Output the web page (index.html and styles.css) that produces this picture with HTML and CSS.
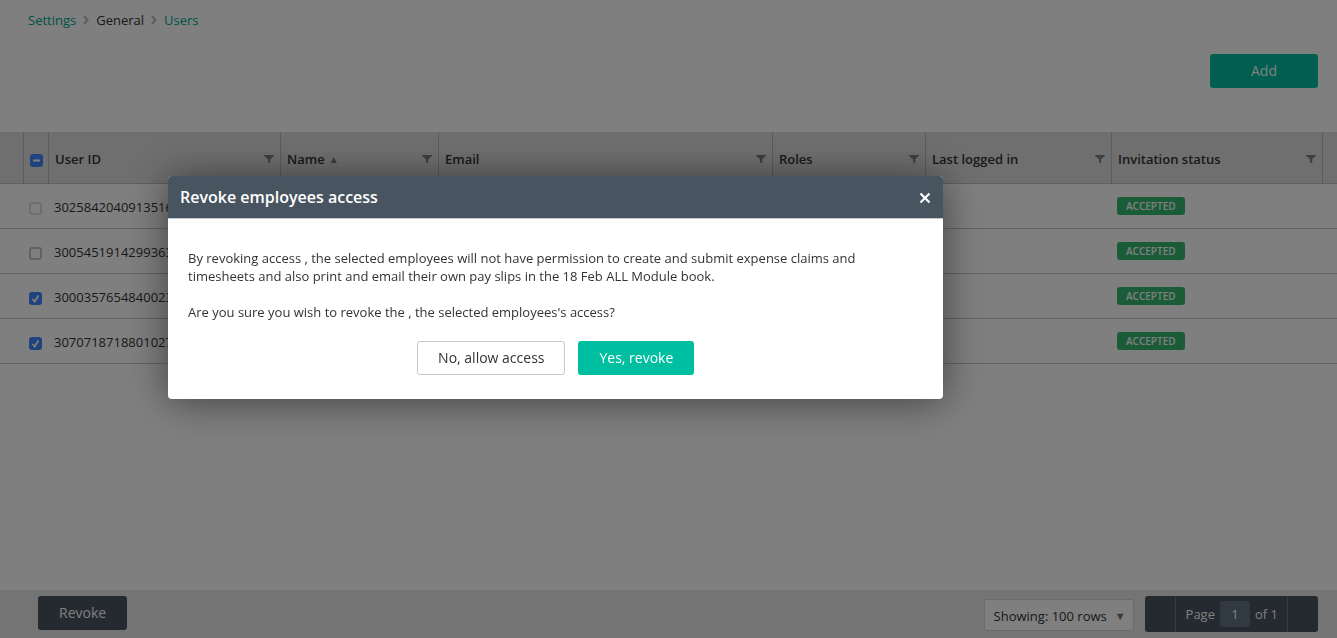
FILE: index.html
```html
<!DOCTYPE html>
<html lang="en">
<head>
<meta charset="UTF-8">
<meta name="viewport" content="width=device-width, initial-scale=1.0">
<title>Users</title>
<link rel="stylesheet" href="styles.css">
</head>
<body>
<svg class="sprite" aria-hidden="true">
  <symbol id="funnel" viewBox="0 0 10 9"><path d="M0 0h10v.8L6.200 4.300V8.600L4 7.200V4.300L0 .8z"/></symbol>
  <symbol id="chevron" viewBox="0 0 6 10"><path d="M1 1l3.500 4L1 9" fill="none" stroke="currentColor" stroke-width="2"/></symbol>
</svg>
<div class="page">
  <nav class="breadcrumb">
    <a href="#">Settings</a>
    <svg class="chevron"><use href="#chevron"/></svg>
    <span>General</span>
    <svg class="chevron"><use href="#chevron"/></svg>
    <a href="#">Users</a>
  </nav>
  <div class="actions">
    <button type="button" class="btn btn-primary btn-add">Add</button>
  </div>
  <table class="grid">
    <colgroup>
      <col class="col-gutter">
      <col class="col-check">
      <col class="col-id">
      <col class="col-name">
      <col class="col-email">
      <col class="col-roles">
      <col class="col-login">
      <col class="col-status">
      <col class="col-end">
    </colgroup>
    <thead>
      <tr>
        <th></th>
        <th class="check"><input type="checkbox" id="selectAll" class="box" aria-label="Select all"></th>
        <th><div class="head">User ID <svg class="funnel"><use href="#funnel"/></svg></div></th>
        <th><div class="head">Name <span class="sort">▲</span><svg class="funnel"><use href="#funnel"/></svg></div></th>
        <th><div class="head">Email <svg class="funnel"><use href="#funnel"/></svg></div></th>
        <th><div class="head">Roles <svg class="funnel"><use href="#funnel"/></svg></div></th>
        <th><div class="head">Last logged in <svg class="funnel"><use href="#funnel"/></svg></div></th>
        <th><div class="head">Invitation status <svg class="funnel"><use href="#funnel"/></svg></div></th>
        <th></th>
      </tr>
    </thead>
    <tbody>
      <tr>
        <td></td>
        <td class="check"><input type="checkbox" class="box" aria-label="Select user" disabled></td>
        <td>3025842040913516</td>
        <td></td><td></td><td></td><td></td>
        <td><span class="badge">ACCEPTED</span></td>
        <td></td>
      </tr>
      <tr>
        <td></td>
        <td class="check"><input type="checkbox" class="box" aria-label="Select user"></td>
        <td>3005451914299363</td>
        <td></td><td></td><td></td><td></td>
        <td><span class="badge">ACCEPTED</span></td>
        <td></td>
      </tr>
      <tr>
        <td></td>
        <td class="check"><input type="checkbox" class="box" aria-label="Select user" checked></td>
        <td>3000357654840023</td>
        <td></td><td></td><td></td><td></td>
        <td><span class="badge">ACCEPTED</span></td>
        <td></td>
      </tr>
      <tr>
        <td></td>
        <td class="check"><input type="checkbox" class="box" aria-label="Select user" checked></td>
        <td>3070718718801027</td>
        <td></td><td></td><td></td><td></td>
        <td><span class="badge">ACCEPTED</span></td>
        <td></td>
      </tr>
    </tbody>
  </table>
  <footer class="footer">
    <button type="button" class="btn btn-dark">Revoke</button>
    <div class="rows">
      <select class="rows-select" aria-label="Rows per page">
        <option>Showing: 100 rows</option>
      </select>
      <span class="arrow">▼</span>
    </div>
    <div class="pager">
      <button type="button" class="pager-btn" aria-label="Previous page"></button>
      <div class="pager-text">
        <label for="pageNo">Page</label>
        <input type="text" id="pageNo" class="pager-input" value="1">
        <span>of 1</span>
      </div>
      <button type="button" class="pager-btn" aria-label="Next page"></button>
    </div>
  </footer>
</div>

<div class="overlay">
  <div class="modal" role="dialog" aria-labelledby="modalTitle">
    <div class="modal-header">
      <h2 id="modalTitle" class="modal-title">Revoke employees access</h2>
      <button type="button" class="close" aria-label="Close">
        <svg width="12" height="12" viewBox="0 0 12 12"><path d="M1.500 1.500l9 9M10.500 1.500l-9 9" stroke="#fff" stroke-width="2.200"/></svg>
      </button>
    </div>
    <div class="modal-body">
      <p>By revoking access , the selected employees will not have permission to create and submit expense claims and timesheets and also print and email their own pay slips in the 18 Feb ALL Module book.</p>
      <p>Are you sure you wish to revoke the , the selected employees's access?</p>
      <div class="modal-buttons">
        <button type="button" class="btn btn-plain">No, allow access</button>
        <button type="button" class="btn btn-primary">Yes, revoke</button>
      </div>
    </div>
  </div>
</div>
<script>
document.getElementById("selectAll").indeterminate = true;
</script>
</body>
</html>
```
FILE: styles.css
```css
* {
  box-sizing: border-box;
}
body {
  margin: 0;
  font-family: "Open Sans", "Noto Sans", sans-serif;
  font-size: 13px;
  line-height: 18px;
  color: #333;
  background-color: #fff;
}
.sprite {
  position: absolute;
  width: 0;
  height: 0;
}
.page {
  display: flex;
  flex-direction: column;
  min-height: 100vh;
}
.breadcrumb {
  display: flex;
  align-items: center;
  gap: 7px;
  padding: 11px 28px 0;
}
.breadcrumb a {
  color: #00a88d;
  font-weight: 500;
  text-decoration: none;
}
.chevron {
  width: 6px;
  height: 10px;
  color: #bbb;
}
.actions {
  display: flex;
  justify-content: flex-end;
  padding: 25px 19px 44px;
}
.btn {
  height: 34px;
  padding: 0 20px 2px;
  border: 1px solid transparent;
  border-radius: 3px;
  font-family: inherit;
  font-size: 14px;
  cursor: pointer;
}
.btn-primary {
  background-color: #00bfa0;
  color: #fff;
  font-weight: 500;
}
.btn-add {
  width: 108px;
}
.btn-dark {
  background-color: #48545f;
  color: #fff;
}
.btn-plain {
  background-color: #fff;
  border-color: #c8c8c8;
  color: #333;
}
.grid {
  width: 100%;
  table-layout: fixed;
  border-collapse: separate;
  border-spacing: 0;
}
.col-gutter { width: 24px; }
.col-check { width: 25px; }
.col-id { width: 232px; }
.col-name { width: 158px; }
.col-roles { width: 153px; }
.col-login { width: 186px; }
.col-status { width: 211px; }
.col-end { width: 14px; }
.grid th {
  height: 52px;
  padding: 3px 6px 0;
  background-color: #dfdfdf;
  border-right: 1px solid #b8b8b8;
  border-bottom: 1px solid #c0c0c0;
  text-align: left;
  font-weight: 600;
}
.grid th:last-child {
  border-right: 0;
}
.grid td {
  height: 45px;
  padding: 1px 5px 0;
  border-bottom: 1px solid #c8c8c8;
}
.grid .check {
  padding: 5px 0 0;
}
.grid td.check {
  padding-right: 2px;
}
.head {
  display: flex;
  align-items: center;
}
.funnel {
  width: 10px;
  height: 9px;
  margin-left: auto;
  fill: #76808a;
}
.sort {
  margin-left: 4px;
  font-size: 10px;
  color: #777;
}
.box {
  appearance: none;
  display: block;
  width: 13px;
  height: 13px;
  margin: 0 auto;
  border: 2px solid #c4c4c4;
  border-radius: 3px;
}
.box:disabled {
  border-color: #dedede;
}
.box:checked,
.box:indeterminate {
  border: 0;
  background: #3f88fa center / 11px 11px no-repeat;
}
.box:checked {
  background-image: url("data:image/svg+xml,%3Csvg xmlns='http://www.w3.org/2000/svg' viewBox='0 0 11 11'%3E%3Cpath d='M2.500 6l2.200 2.500L8.500 2.500' fill='none' stroke='white' stroke-width='1.700'/%3E%3C/svg%3E");
}
.box:indeterminate {
  background-image: url("data:image/svg+xml,%3Csvg xmlns='http://www.w3.org/2000/svg' viewBox='0 0 11 11'%3E%3Cpath d='M2 5.500h7' stroke='white' stroke-width='2'/%3E%3C/svg%3E");
}
.badge {
  display: block;
  width: fit-content;
  margin-bottom: 2px;
  padding: 0 9px;
  border-radius: 3px;
  background-color: #36b870;
  color: #fff;
  font-size: 10px;
  font-weight: 600;
  line-height: 18px;
}
.footer {
  display: flex;
  align-items: flex-start;
  gap: 11px;
  height: 48px;
  margin-top: auto;
  padding: 6px 19px 6px 38px;
  background-color: #e8e8e8;
}
.rows {
  position: relative;
  margin: 3px 0 0 auto;
}
.rows-select {
  appearance: none;
  width: 150px;
  height: 32px;
  padding: 2px 9px 0;
  border: 1px solid #d4d4d4;
  border-radius: 3px;
  background-color: #fff;
  color: #333;
  font: inherit;
}
.arrow {
  position: absolute;
  top: 8px;
  right: 8px;
  font-size: 11px;
  color: #777;
  pointer-events: none;
}
.pager {
  display: flex;
  height: 36px;
  border-radius: 3px;
  background-color: #48545f;
  color: #fff;
}
.pager-btn {
  width: 30px;
  border: 0;
  background: none;
}
.pager-text {
  display: flex;
  align-items: center;
  gap: 5px;
  padding: 0 9px 0 10px;
  border: solid #707983;
  border-width: 0 1px;
}
.pager-input {
  width: 30px;
  height: 26px;
  padding: 0;
  border: 0;
  border-radius: 3px;
  background-color: #637487;
  color: #fff;
  font: inherit;
  text-align: center;
}
.overlay {
  position: fixed;
  inset: 0;
  padding: 176px 168px 0;
  background-color: rgba(0, 0, 0, 0.5);
}
.modal {
  width: 58vw;
  border-radius: 4px;
  background-color: #fff;
  box-shadow: 0 2px 40px rgba(0, 0, 0, 0.5);
}
.modal-header {
  display: flex;
  align-items: center;
  justify-content: space-between;
  height: 43px;
  padding: 0 12px;
  border-bottom: 1px solid #c5c9d0;
  border-radius: 4px 4px 0 0;
  background-color: #48545f;
}
.modal-title {
  margin: 0;
  color: #fff;
  font-size: 16px;
  font-weight: 600;
}
.close {
  display: flex;
  padding: 1px 0 0;
  border: 0;
  background: none;
  cursor: pointer;
}
.modal-body {
  padding: 30px 20px 24px;
}
.modal-body p {
  margin: 0 60px 18px 0;
}
.modal-buttons {
  display: flex;
  justify-content: center;
  gap: 13px;
  padding-top: 2px;
}
```
